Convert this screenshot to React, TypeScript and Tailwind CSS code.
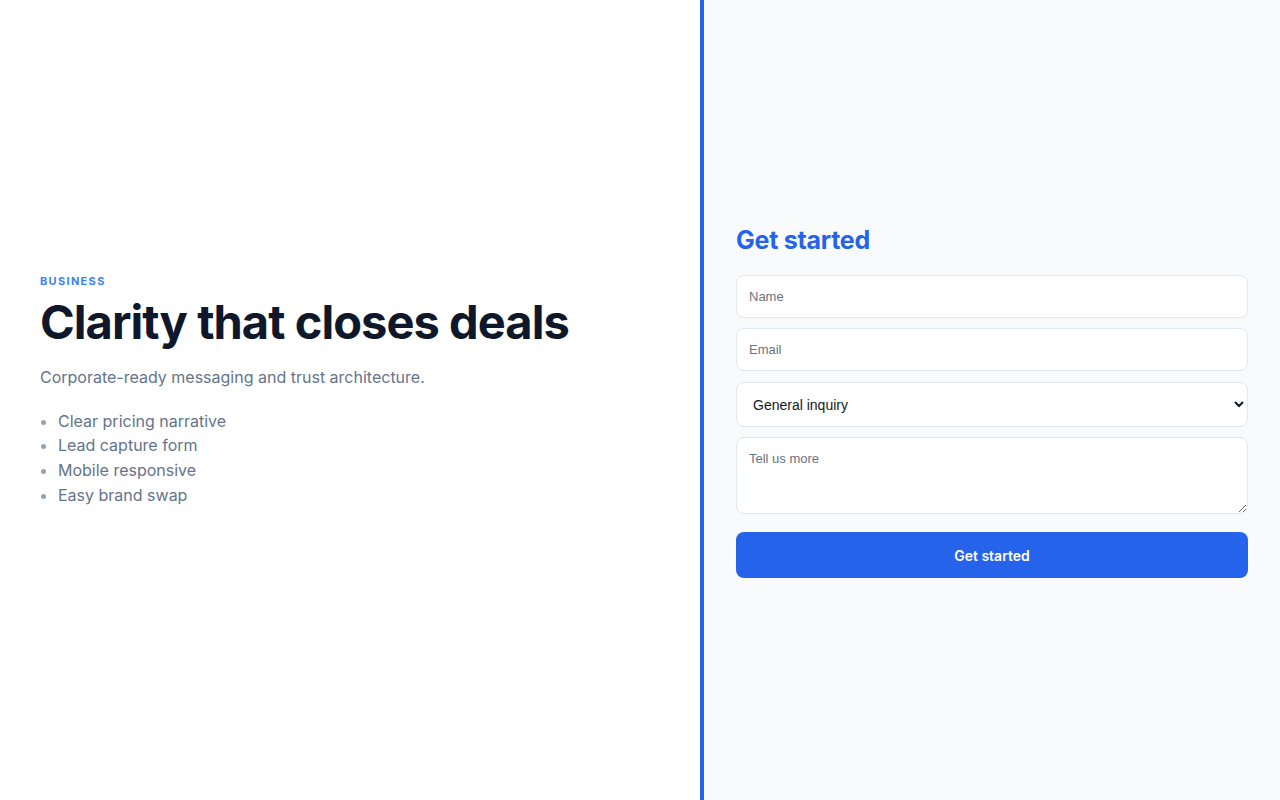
const features = ['Clear pricing narrative', 'Lead capture form', 'Mobile responsive', 'Easy brand swap'];

const fieldClass =
  'w-full rounded-lg border border-[#e2e8f0] bg-white px-3 text-[13px] text-[#111827] placeholder:text-[#6b7280] outline-none';

export default function App() {
  return (
    <div className="flex min-h-[800px] w-full font-['Inter',sans-serif]">
      <section className="flex w-[700px] flex-col justify-center bg-white px-10 pb-5">
        <p className="text-[11px] font-bold uppercase tracking-[0.12em] text-[#3b82f6]">Business</p>
        <h1 className="mt-[5px] text-[47px] font-bold leading-[1.2] tracking-[-0.02em] text-[#0f172a]">
          Clarity that closes deals
        </h1>
        <p className="mt-[14px] text-[16px] leading-6 text-[#64748b]">
          Corporate-ready messaging and trust architecture.
        </p>
        <ul className="mt-[20px] list-disc pl-[18px] text-[16px] leading-[24.7px] text-[#64748b] marker:text-[#94a3b8]">
          {features.map((item) => (
            <li key={item}>{item}</li>
          ))}
        </ul>
      </section>

      <section className="flex flex-1 flex-col justify-center border-l-4 border-[#2563eb] bg-[#f8fafc] px-8 pt-[2px]">
        <h2 className="text-[25px] font-bold leading-8 tracking-[-0.01em] text-[#2563eb]">Get started</h2>
        <form className="mt-[19px] flex flex-col gap-[10px] font-['Liberation_Sans',Arial,sans-serif]">
          <input className={`${fieldClass} h-[43px]`} placeholder="Name" />
          <input className={`${fieldClass} h-[43px]`} placeholder="Email" type="email" />
          <select className={`${fieldClass} mt-px h-[45px] appearance-auto text-[14px]`} defaultValue="general">
            <option value="general">General inquiry</option>
            <option value="sales">Sales</option>
            <option value="support">Support</option>
          </select>
          <textarea className={`${fieldClass} h-[77px] py-[13px] leading-4`} placeholder="Tell us more" />
          <button
            type="button"
            className="mt-2 h-[46px] w-full rounded-lg bg-[#2563eb] font-['Inter',sans-serif] text-[14px] font-semibold text-white"
          >
            Get started
          </button>
        </form>
      </section>
    </div>
  );
}
